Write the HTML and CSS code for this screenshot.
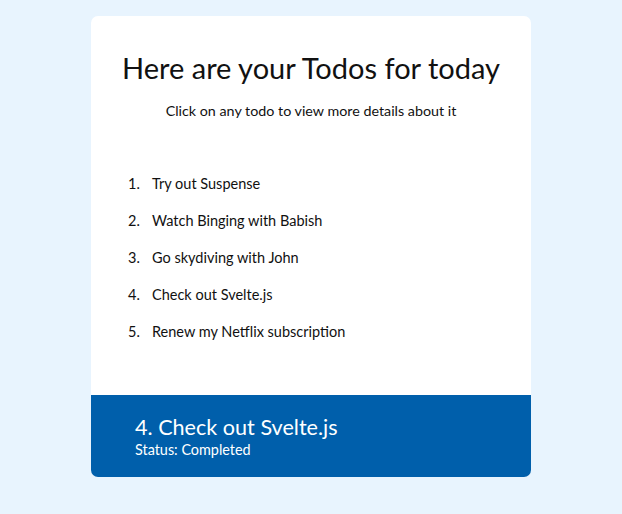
FILE: index.html
```html
<!DOCTYPE html>
<html>
<head>
<meta charset="utf-8">
<link rel="stylesheet" href="styles.css">
</head>
<body>
<div class="card">
  <div class="main">
    <h1 class="title">Here are your Todos for today</h1>
    <p class="subtitle">Click on any todo to view more details about it</p>
    <ol class="todos">
      <li class="todo"><span class="num">1.</span><span>Try out Suspense</span></li>
      <li class="todo"><span class="num">2.</span><span>Watch Binging with Babish</span></li>
      <li class="todo"><span class="num">3.</span><span>Go skydiving with John</span></li>
      <li class="todo"><span class="num">4.</span><span>Check out Svelte.js</span></li>
      <li class="todo"><span class="num">5.</span><span>Renew my Netflix subscription</span></li>
    </ol>
  </div>
  <div class="detail">
    <div class="detail-title">4. Check out Svelte.js</div>
    <div class="detail-status">Status: Completed</div>
  </div>
</div>
</body>
</html>
```

FILE: styles.css
```css
html, body {
  margin: 0;
  padding: 0;
  background: #e8f4fe;
  font-family: "Lato", "Open Sans", sans-serif;
  color: #111;
}
.card {
  width: 440px;
  margin: 16px auto 0;
  background: #fff;
  border-radius: 7px;
  overflow: hidden;
}
.main {
  padding: 34px 0 53px;
}
.title {
  margin: 0;
  text-align: center;
  font-size: 29px;
  line-height: 36px;
  font-weight: 400;
}
.subtitle {
  margin: 15px 0 0;
  text-align: center;
  font-size: 14.3px;
  line-height: 20px;
}
.todos {
  list-style: none;
  margin: 53px 0 0;
  padding: 0 0 0 37px;
  display: flex;
  flex-direction: column;
  gap: 17px;
}
.todo {
  display: flex;
  font-size: 14.5px;
  line-height: 20px;
}
.num {
  width: 24px;
}
.detail {
  background: #005fab;
  color: #fff;
  padding: 19px 44px 18px;
}
.detail-title {
  font-size: 21.6px;
  line-height: 26px;
}
.detail-status {
  font-size: 14.4px;
  line-height: 18px;
  margin-top: 1px;
}
```
